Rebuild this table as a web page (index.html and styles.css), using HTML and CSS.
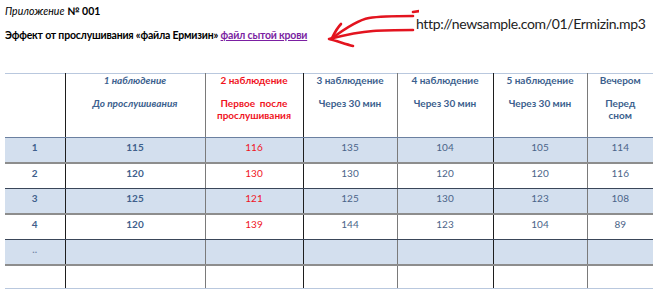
FILE: index.html
```html
<!DOCTYPE html>
<html lang="ru">
<head>
<meta charset="utf-8">
<title>Приложение № 001</title>
<link rel="stylesheet" href="styles.css">
</head>
<body>
<div class="top">
  <div class="intro">
    <div class="line1"><i>Приложение</i> <b>№ 001</b></div>
    <div class="line2"><b>Эффект от прослушивания «файла Ермизин»</b> <a class="link" href="#">файл сытой крови</a></div>
  </div>
  <svg class="arrow" width="96" height="40" viewBox="0 0 96 40">
    <g fill="none" stroke="#e3141f" stroke-width="2.6" stroke-linecap="round" stroke-linejoin="round">
      <path d="M90 8 C75 8 58 8 46 10 C34 12 20 22 8 31"/>
      <path d="M90 22 C78 22 62 22 50 23 C36 24 22 27 6 31 C14 33 22 36 30 38"/>
      <path d="M9 30 C12 24 15 19 18 16"/>
      <path d="M90 4 L97 3"/>
    </g>
  </svg>
  <div class="url">http://newsample.com/01/Ermizin.mp3</div>
</div>
<table class="grid">
  <colgroup>
    <col class="c0"><col class="c1"><col class="c2"><col class="c3"><col class="c4"><col class="c5"><col class="c6">
  </colgroup>
  <thead>
    <tr class="head">
      <th class="vd"></th>
      <th class="vg it">1 наблюдение<br><br>До прослушивания</th>
      <th class="vd red">2 наблюдение<br><br>Первое&nbsp; после прослушивания</th>
      <th class="vg">3 наблюдение<br><br>Через 30 мин</th>
      <th class="vd">4 наблюдение<br><br>Через 30 мин</th>
      <th class="vg">5 наблюдение<br><br>Через 30 мин</th>
      <th>Вечером<br><br>Перед<br>сном</th>
    </tr>
  </thead>
  <tbody>
    <tr class="shade bgray">
      <td class="vd num">1</td><td class="vg num">115</td><td class="vd red">116</td><td class="vg">135</td><td class="vd">104</td><td class="vg">105</td><td>114</td>
    </tr>
    <tr class="bdark">
      <td class="vd num">2</td><td class="vg num">120</td><td class="vd red">130</td><td class="vg">130</td><td class="vd">120</td><td class="vg">120</td><td>116</td>
    </tr>
    <tr class="shade bgray">
      <td class="vd num">3</td><td class="vg num">125</td><td class="vd red">121</td><td class="vg">125</td><td class="vd">130</td><td class="vg">123</td><td>108</td>
    </tr>
    <tr class="bdark">
      <td class="vd num">4</td><td class="vg num">120</td><td class="vd red">139</td><td class="vg">144</td><td class="vd">123</td><td class="vg">104</td><td>89</td>
    </tr>
    <tr class="shade bgray">
      <td class="vd dots">..</td><td class="vg"></td><td class="vd"></td><td class="vg"></td><td class="vd"></td><td class="vg"></td><td></td>
    </tr>
    <tr class="last">
      <td class="vd"></td><td class="vg"></td><td class="vd"></td><td class="vg"></td><td class="vd"></td><td class="vg"></td><td></td>
    </tr>
  </tbody>
</table>
</body>
</html>
```
FILE: styles.css
```css
html, body {
  margin: 0;
  padding: 0;
  background: #ffffff;
}
body {
  padding-left: 5px;
  font-family: "Lato", "Open Sans", sans-serif;
  color: #000;
}
.top {
  display: flex;
  align-items: flex-start;
  height: 73px;
}
.intro {
  flex: none;
  width: 318px;
  font-size: 10.5px;
  white-space: nowrap;
}
.line1 {
  margin-top: 4px;
  line-height: 14px;
}
.line2 {
  margin-top: 10px;
  line-height: 14px;
  letter-spacing: -0.2px;
}
.link {
  color: #7b1fa2;
  font-weight: bold;
  text-decoration: underline;
}
.arrow {
  margin-top: 8px;
  flex: none;
}
.url {
  margin-left: -3px;
  margin-top: 15px;
  font-size: 14px;
  letter-spacing: -0.35px;
  line-height: 18px;
  color: #222;
  white-space: nowrap;
}
.grid {
  border-collapse: collapse;
  table-layout: fixed;
  width: 648px;
  border-top: 1px solid #b9c8de;
  font-size: 10px;
  color: #4b6489;
}
.c0 { width: 60px; }
.c1 { width: 140px; }
.c2 { width: 98px; }
.c3 { width: 94px; }
.c4 { width: 96px; }
.c5 { width: 94px; }
.c6 { width: 66px; }
th, td {
  padding: 0;
  text-align: center;
  vertical-align: top;
}
.head th {
  height: 62px;
  padding-top: 1px;
  line-height: 11.6px;
  font-weight: bold;
  color: #3c5f8e;
  border-bottom: 1px solid #6b80a0;
}
.head th.red, td.red {
  color: #f0141e;
}
th.it { font-style: italic; }
.vd { border-right: 1px solid #1e1e1e; }
.vg { border-right: 1px solid #7a7a7a; }
td {
  height: 21px;
  padding-top: 3px;
  line-height: 12px;
}
.shade td { background: #d3dfee; }
.bgray td { border-bottom: 2px solid #8d8d8d; }
.bdark td { border-bottom: 1px solid #3a4659; }
.last td { border-bottom: 1px solid #b9c8de; height: 19px; }
td.num { font-weight: bold; color: #3f5f8c; }
td.dots { font-weight: bold; color: #7388a8; }
```
